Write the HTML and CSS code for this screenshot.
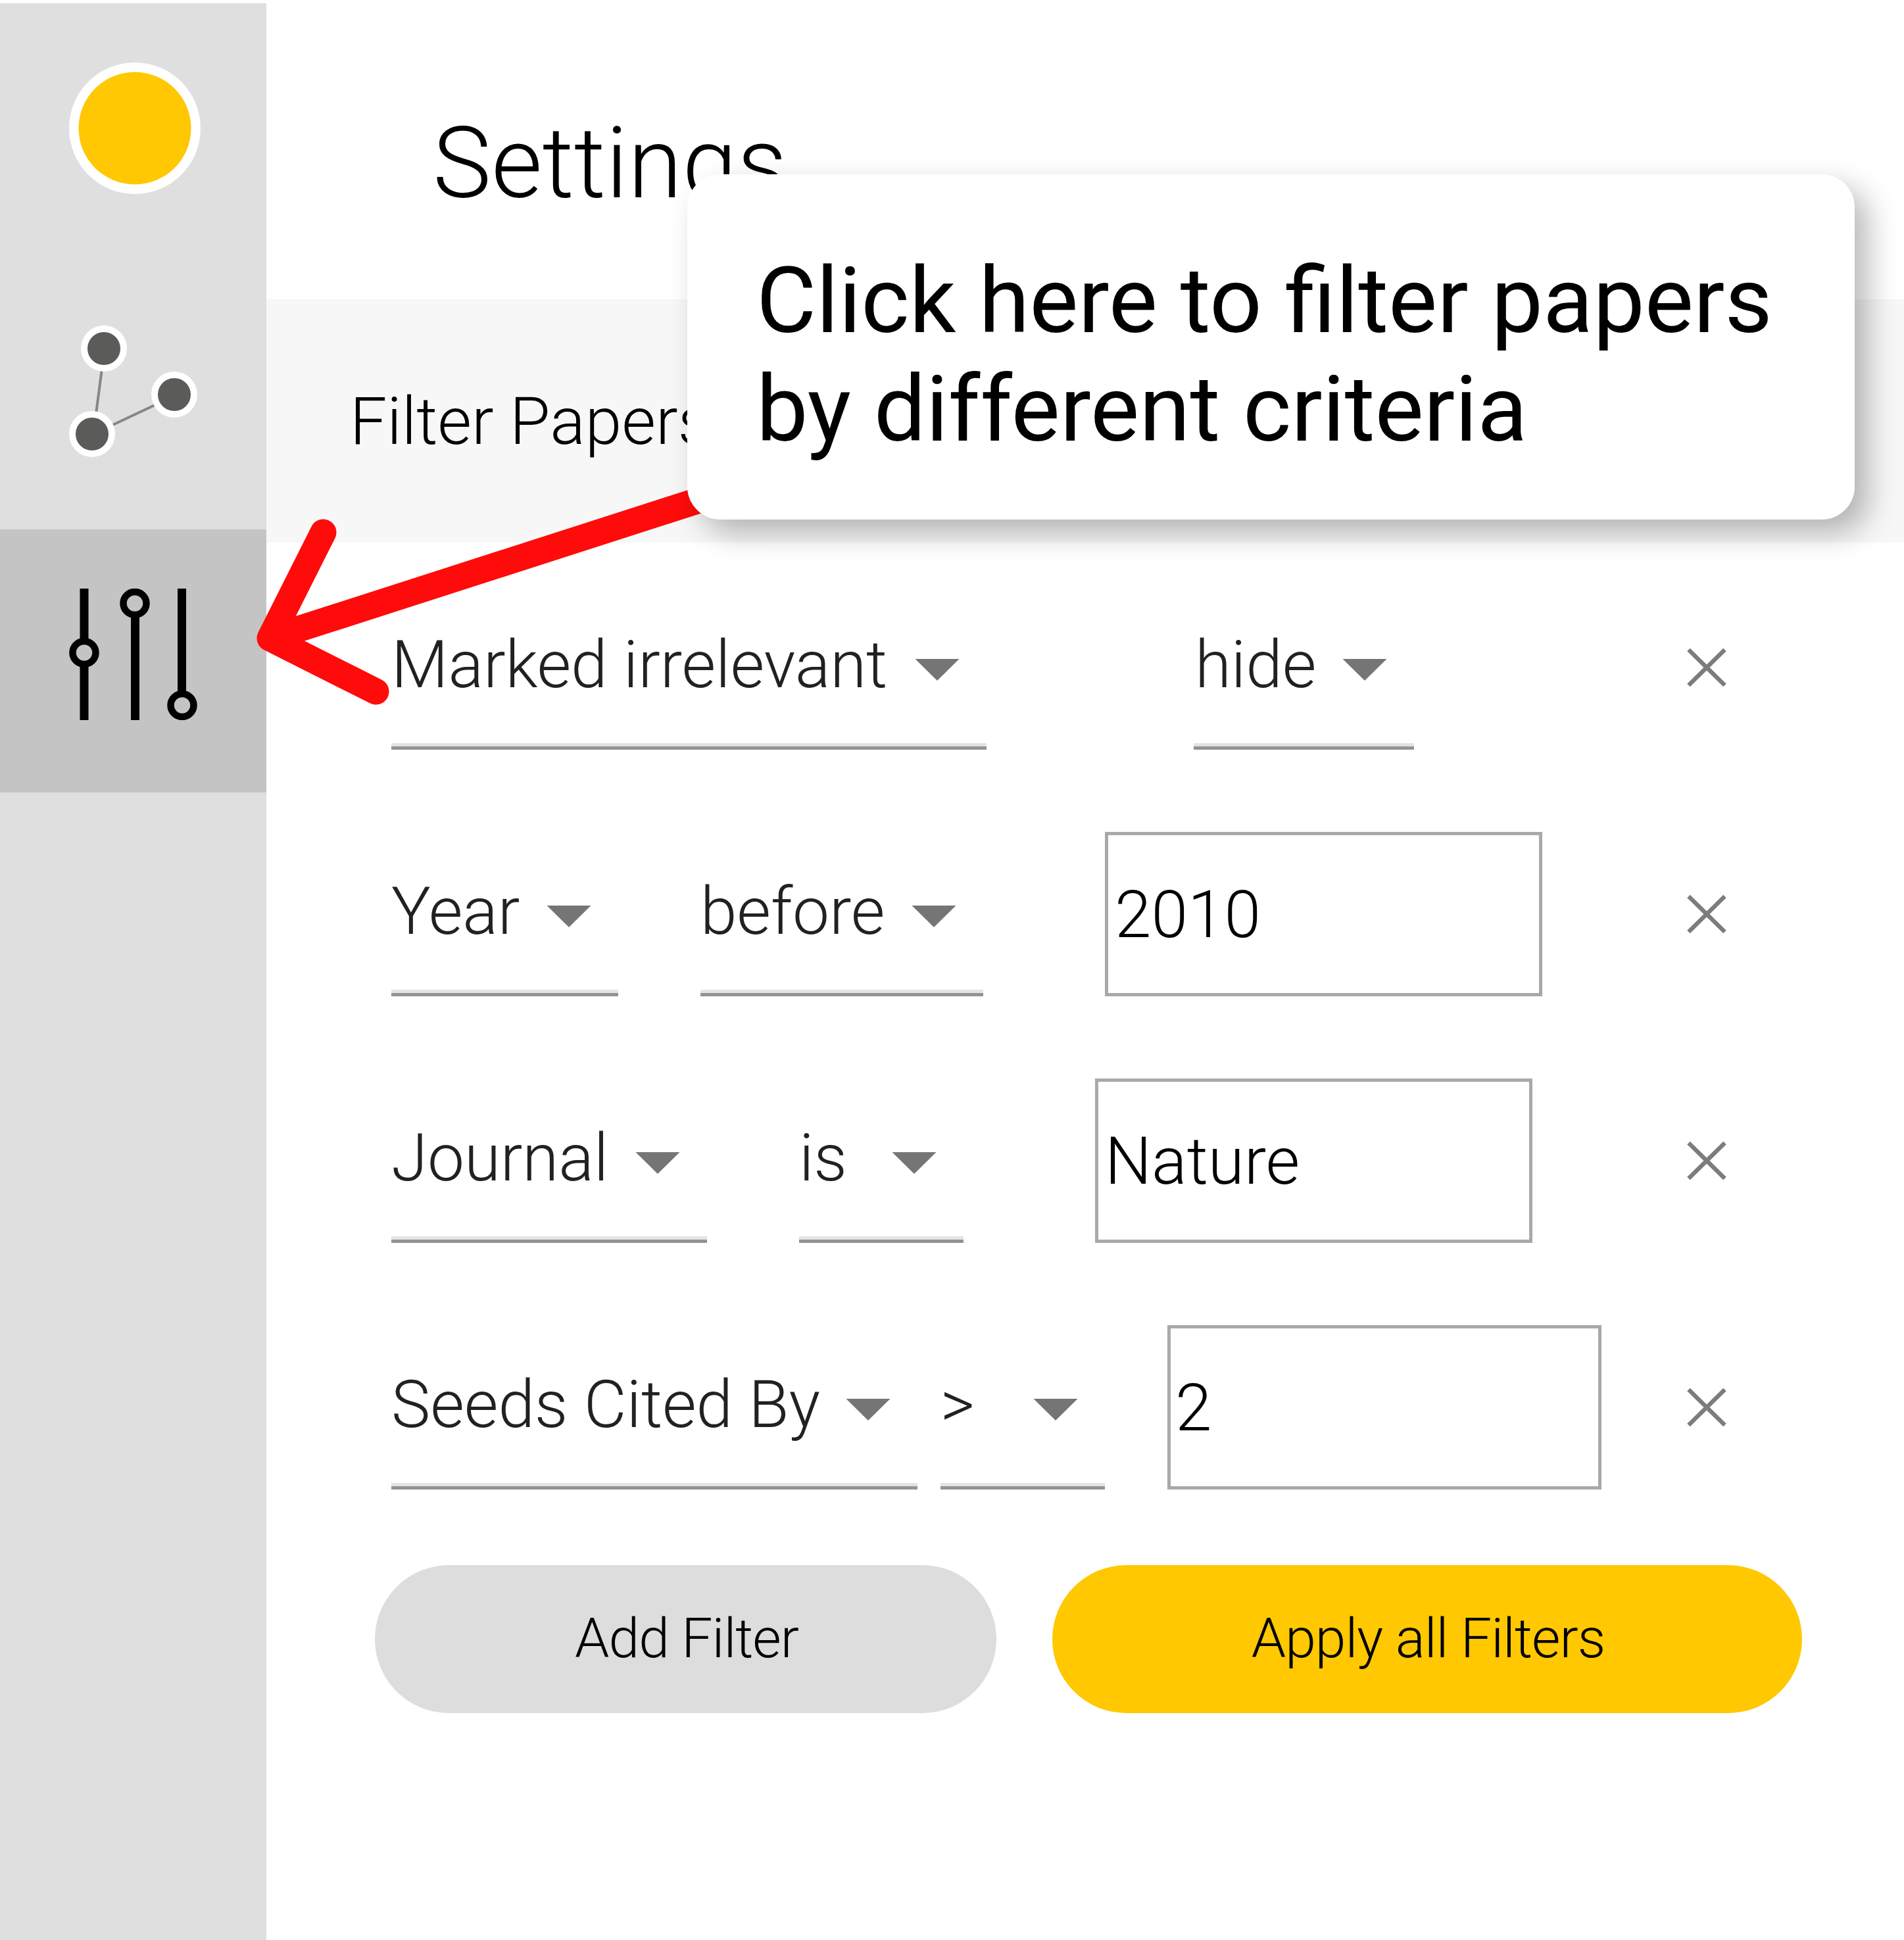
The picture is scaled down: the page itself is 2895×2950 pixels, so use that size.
FILE: index.html
```html
<!DOCTYPE html>
<html lang="en">
<head>
<meta charset="utf-8">
<title>Settings</title>
<link rel="stylesheet" href="styles.css">
</head>
<body>
<div class="app">
  <nav class="sidebar">
    <div class="tab tab-home">
      <svg class="icon" viewBox="0 0 200 200"><circle cx="100" cy="100" r="100" fill="#fff"/><circle cx="100" cy="100" r="85.500" fill="#ffc803"/></svg>
    </div>
    <div class="tab tab-graph">
      <svg class="icon" viewBox="0 0 200 200">
        <path d="M54 35 37 165 160 107" fill="none" stroke="#868684" stroke-width="4"/>
        <g fill="#5b5b59" stroke="#fff" stroke-width="10"><circle cx="53" cy="35" r="30"/><circle cx="160" cy="105" r="30"/><circle cx="35" cy="165" r="30"/></g>
      </svg>
    </div>
    <div class="tab tab-filters">
      <svg class="icon" viewBox="0 0 200 200" fill="none" stroke="#000">
        <path d="M23 0V80M23 115V200M100.500 40V200M171.500 0V160" stroke-width="13"/>
        <g stroke-width="10.500"><circle cx="23" cy="97.500" r="17.500"/><circle cx="100" cy="22.500" r="17.500"/><circle cx="172" cy="177.500" r="17.500"/></g>
      </svg>
    </div>
  </nav>
  <main class="panel">
    <header class="panel-header"><h1 class="title">Settings</h1></header>
    <div class="section-bar"><h2 class="section-title">Filter Papers</h2></div>
    <div class="filters">
      <div class="row">
        <div class="select w-marked"><span>Marked irrelevant</span><svg class="caret" viewBox="0 0 70 35"><path d="M1.500 2H68.500L35 35Z"/></svg></div>
        <div class="select w-hide"><span>hide</span><svg class="caret" viewBox="0 0 70 35"><path d="M1.500 2H68.500L35 35Z"/></svg></div>
        <svg class="remove" viewBox="0 0 60 60"><path d="M2.500 3 57.500 57M57.500 3 2.500 57"/></svg>
      </div>
      <div class="row">
        <div class="select w-year"><span>Year</span><svg class="caret" viewBox="0 0 70 35"><path d="M1.500 2H68.500L35 35Z"/></svg></div>
        <div class="select w-before"><span>before</span><svg class="caret" viewBox="0 0 70 35"><path d="M1.500 2H68.500L35 35Z"/></svg></div>
        <div class="input i-year"><span>2010</span></div>
        <svg class="remove" viewBox="0 0 60 60"><path d="M2.500 3 57.500 57M57.500 3 2.500 57"/></svg>
      </div>
      <div class="row">
        <div class="select w-journal"><span>Journal</span><svg class="caret" viewBox="0 0 70 35"><path d="M1.500 2H68.500L35 35Z"/></svg></div>
        <div class="select w-is"><span>is</span><svg class="caret" viewBox="0 0 70 35"><path d="M1.500 2H68.500L35 35Z"/></svg></div>
        <div class="input i-journal"><span>Nature</span></div>
        <svg class="remove" viewBox="0 0 60 60"><path d="M2.500 3 57.500 57M57.500 3 2.500 57"/></svg>
      </div>
      <div class="row">
        <div class="select w-seeds"><span>Seeds Cited By</span><svg class="caret" viewBox="0 0 70 35"><path d="M1.500 2H68.500L35 35Z"/></svg></div>
        <div class="select w-gt"><span>&gt;</span><svg class="caret" viewBox="0 0 70 35"><path d="M1.500 2H68.500L35 35Z"/></svg></div>
        <div class="input i-seeds"><span>2</span></div>
        <svg class="remove" viewBox="0 0 60 60"><path d="M2.500 3 57.500 57M57.500 3 2.500 57"/></svg>
      </div>
    </div>
    <div class="actions">
      <div class="button add">Add Filter</div>
      <div class="button apply">Apply all Filters</div>
    </div>
  </main>
  <svg class="arrow" viewBox="0 0 760 320"><path d="M730 -4.500 30.500 220.500M111.500 59.500 30.500 220.500 191.500 301.500"/></svg>
  <div class="callout">Click here to filter papers<br>by different criteria</div>
</div>
</body>
</html>
```
FILE: styles.css
```css
* { box-sizing: border-box; }
body { margin: 0; background: #fff; font-family: Roboto, "Liberation Sans", sans-serif; font-weight: 300; color: #000; }
.app { position: relative; display: flex; width: 2895px; height: 2950px; padding-top: 5px; overflow: hidden; }

.sidebar { flex: none; width: 405px; background: #dfdfdf; display: flex; flex-direction: column; }
.tab { display: flex; align-items: center; justify-content: center; height: 400px; padding-left: 5px; }
.tab-home { height: 380px; }
.tab-graph { height: 420px; }
.tab-filters { background: #c4c4c4; padding-bottom: 20px; }
.icon { display: block; width: 200px; height: 200px; }

.panel { flex: 1; display: flex; flex-direction: column; }
.panel-header { height: 450px; padding: 156px 0 0 253px; }
.title { margin: 0; font-size: 150px; line-height: 176px; font-weight: 300; white-space: nowrap; }
.section-bar { height: 370px; padding: 127px 0 0 127px; background: #f7f7f7; }
.section-title { margin: 0; font-size: 100px; line-height: 118px; font-weight: 300; white-space: nowrap; }

.filters { display: flex; flex-direction: column; gap: 125px; padding: 65px 270px 0 190px; }
.row { display: flex; align-items: center; height: 250px; }
.select { display: flex; align-items: center; justify-content: space-between; height: 250px; padding-right: 40px; border-bottom: 5px solid #939393; box-shadow: inset 0 -5px #e3e3e3; color: #212121; font-size: 100px; line-height: 118px; letter-spacing: -.1px; white-space: nowrap; }
.select span { margin-top: -3px; }
.caret { flex: none; width: 70px; height: 35px; margin-top: 9px; fill: #757575; }
.input { height: 250px; display: flex; align-items: center; border: 5px solid #a9a9a9; padding: 2px 0 0 10px; font-size: 100px; line-height: 118px; }
.remove { width: 60px; height: 60px; margin-left: auto; fill: none; stroke: #7c7c7c; stroke-width: 6.5; }
.w-marked { width: 905px; }
.w-hide { width: 335px; margin-left: 315px; padding-left: 2px; }
.w-year { width: 345px; }
.w-before { width: 430px; margin-left: 125px; }
.w-journal { width: 480px; }
.w-is { width: 250px; margin-left: 140px; }
.w-seeds { width: 800px; }
.w-gt { width: 250px; margin-left: 35px; }
.i-year { width: 665px; margin-left: 185px; }
.i-journal { width: 665px; margin-left: 200px; }
.i-seeds { width: 660px; margin-left: 95px; padding-left: 7px; }

.actions { display: flex; gap: 85px; padding: 115px 0 0 165px; }
.button { display: flex; align-items: center; justify-content: center; height: 225px; padding: 0 0 3px 3px; border-radius: 113px; font-size: 84px; letter-spacing: -1px; }
.add { width: 945px; background: #ddd; }
.apply { width: 1140px; background: #ffc800; }

.arrow { position: absolute; left: 380px; top: 750px; width: 760px; height: 320px; overflow: visible; fill: none; stroke: #ff0b0b; stroke-width: 40; stroke-linecap: round; stroke-linejoin: round; }
.callout { position: absolute; left: 1045px; top: 265px; width: 1775px; height: 525px; padding: 110px 0 0 105px; border-radius: 50px; background: #fff; box-shadow: 20px 20px 46px rgba(0, 0, 0, .28); font-size: 140px; line-height: 165px; font-weight: 400; white-space: nowrap; }
```
